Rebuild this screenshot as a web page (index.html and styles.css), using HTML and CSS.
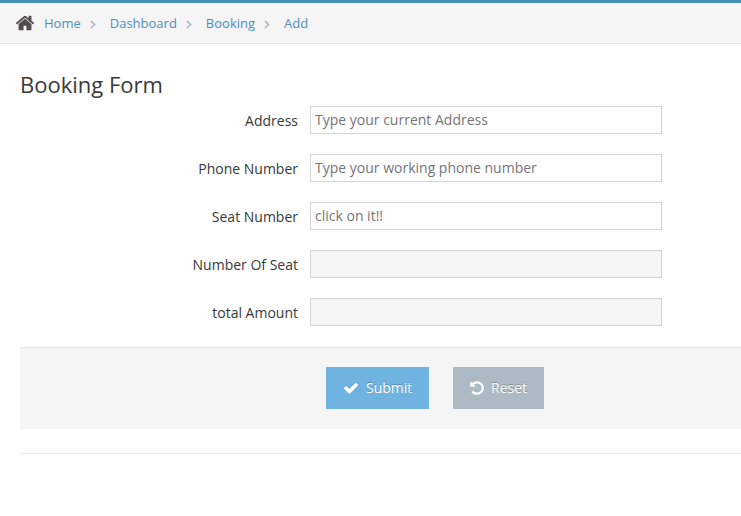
FILE: index.html
```html
<!DOCTYPE html>
<html lang="en">
<head>
<meta charset="utf-8">
<title>Booking Form</title>
<link rel="stylesheet" href="styles.css">
</head>
<body>
<nav class="breadcrumbs">
  <svg class="home-icon" viewBox="0 0 1792 1792"><path d="M1472 992v480q0 26-19 45t-45 19h-384v-384h-256v384h-384q-26 0-45-19t-19-45v-480q0-1 .5-3t.5-3l575-474 575 474q1 2 1 6zm223-69l-62 74q-8 9-21 11h-3q-13 0-21-7l-692-577-692 577q-12 8-24 7-13-2-21-11l-62-74q-8-10-7-23.5t11-21.5l719-599q32-26 76-26t76 26l244 204v-195q0-14 9-23t23-9h192q14 0 23 9t9 23v408l219 182q10 8 11 21.5t-7 23.5z"/></svg>
  <a>Home</a>
  <svg class="sep" viewBox="0 0 6 9"><path d="M1 1l3.6 3.5L1 8"/></svg>
  <a>Dashboard</a>
  <svg class="sep" viewBox="0 0 6 9"><path d="M1 1l3.6 3.5L1 8"/></svg>
  <a>Booking</a>
  <svg class="sep" viewBox="0 0 6 9"><path d="M1 1l3.6 3.5L1 8"/></svg>
  <a>Add</a>
</nav>
<main class="content">
  <h1>Booking Form</h1>
  <form>
    <div class="row"><label for="address">Address</label><input id="address" type="text" placeholder="Type your current Address"></div>
    <div class="row"><label for="phone">Phone Number</label><input id="phone" type="text" placeholder="Type your working phone number"></div>
    <div class="row"><label for="seat">Seat Number</label><input id="seat" type="text" placeholder="click on it!!"></div>
    <div class="row"><label for="count">Number Of Seat</label><input id="count" type="text" readonly></div>
    <div class="row"><label for="total">total Amount</label><input id="total" type="text" readonly></div>
    <div class="actions">
      <button class="btn submit" type="button"><svg viewBox="0 0 1792 1792"><path d="M1671 566q0 40-28 68l-724 724-136 136q-28 28-68 28t-68-28l-136-136-362-362q-28-28-28-68t28-68l136-136q28-28 68-28t68 28l294 295 656-657q28-28 68-28t68 28l136 136q28 28 28 68z"/></svg>Submit</button>
      <button class="btn reset" type="reset"><svg viewBox="0 0 1792 1792"><path d="M1664 896q0 156-61 298t-164 245-245 164-298 61q-172 0-327-72.5t-264-204.5q-7-10-6.5-22.5t8.5-20.5l137-138q10-9 25-9 16 2 23 12 73 95 179 147t225 52q104 0 198.5-40.5t163.5-109.5 109.5-163.5 40.5-198.5-40.5-198.5-109.5-163.5-163.5-109.5-198.5-40.5q-98 0-188 35.5t-160 101.5l137 138q31 30 14 69-17 40-59 40h-448q-26 0-45-19t-19-45v-448q0-42 40-59 39-17 69 14l130 129q107-101 244.5-156.5t284.5-55.5q156 0 298 61t245 164 164 245 61 298z"/></svg>Reset</button>
    </div>
  </form>
  <hr>
</main>
</body>
</html>
```
FILE: styles.css
```css
* { box-sizing: border-box; }
body {
  margin: 0;
  background: #fff;
  color: #393939;
  font: 14px/20px "Open Sans", sans-serif;
  overflow: hidden;
}
.breadcrumbs {
  display: flex;
  align-items: center;
  height: 44px;
  padding-left: 15px;
  border-top: 3px solid #438eb9;
  border-bottom: 1px solid #e5e5e5;
  background: #f5f5f5;
  font-size: 13px;
}
.breadcrumbs a { color: #4c8fbd; }
.home-icon { width: 20px; height: 20px; margin-right: 9px; fill: #4f4d49; }
.sep {
  width: 6px;
  height: 9px;
  margin: 2px 14px 0 9px;
  fill: none;
  stroke: #b2b6bf;
  stroke-width: 1.7;
}
.content { padding-left: 20px; }
h1 {
  margin: 24px 0 6px;
  font-size: 22px;
  line-height: 32px;
  font-weight: 400;
}
.row { display: flex; height: 28px; margin-bottom: 20px; }
.row label { width: 278px; margin-right: 12px; padding-top: 5px; text-align: right; }
.row input {
  width: 352px;
  height: 28px;
  padding: 3px 4px 4px;
  border: 1px solid #d5d5d5;
  border-radius: 0;
  outline: 0;
  background: #fff;
  color: #858585;
  font: inherit;
}
.row input::placeholder { color: #757575; }
.row input[readonly] { background: #f5f5f5; }
.actions {
  display: flex;
  gap: 24px;
  height: 82px;
  margin-top: 21px;
  padding: 19px 0 0 306px;
  border-top: 1px solid #e5e5e5;
  background: #f5f5f5;
}
.btn {
  display: flex;
  align-items: center;
  height: 42px;
  padding: 0;
  border: 0;
  color: #fff;
  font: inherit;
  text-shadow: 0 -1px 0 rgba(0, 0, 0, .25);
}
.btn svg { width: 16px; height: 16px; margin: 0 7px 0 17px; fill: #fff; }
.submit { width: 103px; background: #6fb3e0; }
.reset { width: 91px; background: #abbac3; }
.reset svg { margin-left: 16px; margin-right: 6px; }
hr { height: 1px; margin: 24px 0 0; border: 0; background: #e5e5e5; }
```
